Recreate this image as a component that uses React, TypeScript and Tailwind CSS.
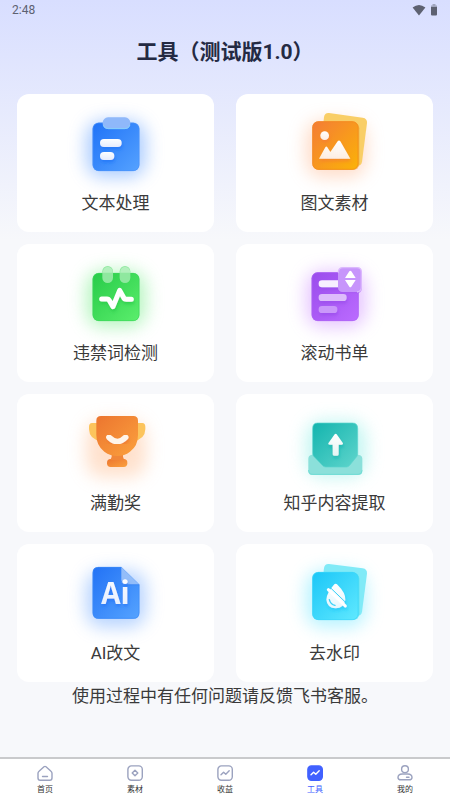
import React from 'react'

import { clsx } from 'clsx'

interface ArtProps {
  id: string
  glow: string
  from: string
  to: string
  x?: number
  y?: number
  children: React.ReactNode
}

/**
 * Shared canvas for the tool icons: soft coloured glow, body gradient
 * (`<id>-body`), white glyph gradient (`<id>-glyph`) and glyph shadow.
 */
const Art = ({ id, glow, from, to, x = -13, y = 0, children }: ArtProps) => (
  <svg
    viewBox={`${x} ${y} 270 270`}
    className="h-[90px] w-[90px] overflow-visible"
    aria-hidden="true"
  >
    <defs>
      <linearGradient id={`${id}-body`} x1="0" y1="0" x2="1" y2="1">
        <stop offset="0" stopColor={from} />
        <stop offset="1" stopColor={to} />
      </linearGradient>
      <linearGradient id={`${id}-glyph`} x1="0" y1="0" x2="0" y2="1">
        <stop offset="0" stopColor="#fff" />
        <stop offset="1" stopColor="#fff" stopOpacity="0.82" />
      </linearGradient>
      <filter id={`${id}-blur`} x="-60%" y="-60%" width="220%" height="220%">
        <feGaussianBlur stdDeviation="25" />
      </filter>
      <filter id={`${id}-shadow`} x="-40%" y="-40%" width="180%" height="200%">
        <feDropShadow dx="2" dy="8" stdDeviation="5" floodColor={from} floodOpacity="0.7" />
      </filter>
    </defs>
    <rect
      x="32"
      y={y + 62}
      width="180"
      height="170"
      rx="50"
      fill={glow}
      opacity="0.62"
      filter={`url(#${id}-blur)`}
    />
    {children}
  </svg>
)

const TextArt = () => (
  <Art id="text" glow="#7db0ff" from="#1f72f7" to="#55a2ff">
    <rect x="52" y="68" width="140" height="145" rx="18" fill="url(#text-body)" />
    <rect x="53" y="69" width="138" height="143" rx="17" fill="none" stroke="#4a93fa" strokeWidth="2" />
    <rect x="82" y="52" width="83" height="35" rx="16" fill="#8fb8fa" />
    <path d="M84 76q4 10 15 10h49q13 0 16-11" fill="none" stroke="#86d0fb" strokeWidth="3" />
    <g fill="url(#text-glyph)" filter="url(#text-shadow)">
      <rect x="74" y="117" width="65" height="24" rx="12" />
      <rect x="74" y="156" width="43" height="24" rx="12" />
    </g>
  </Art>
)

const ImageArt = () => (
  <Art id="image" glow="#ffc7a8" from="#f47c36" to="#fbb307" x={-16}>
    <path
      d="M101 39l101 14q14 2 13 16l-15 116q-2 13-15 12L84 184q-12-2-11-14L86 51q2-13 15-12Z"
      fill="#f9ce66"
    />
    <rect x="54" y="67" width="138" height="143" rx="18" fill="#e69b22" opacity="0.55" />
    <rect x="51" y="64" width="138" height="145" rx="18" fill="url(#image-body)" />
    <rect x="52" y="65" width="136" height="143" rx="17" fill="none" stroke="#f58a1f" strokeWidth="2" />
    <g fill="url(#image-glyph)" filter="url(#image-shadow)">
      <circle cx="88" cy="107" r="13" />
      <path d="M71 176l19-34q3-5 6 0l9 14 22-32q4-5 8 0l30 52Z" />
    </g>
  </Art>
)

const CheckArt = () => (
  <Art id="check" glow="#8df09c" from="#27cb49" to="#5bee6c">
    <rect x="52" y="69" width="140" height="144" rx="18" fill="url(#check-body)" />
    <rect x="53" y="70" width="138" height="142" rx="17" fill="none" stroke="#3cd85c" strokeWidth="2" />
    <rect x="81" y="48" width="32" height="51" rx="16" fill="#8fe89f" />
    <rect x="133" y="48" width="32" height="51" rx="16" fill="#8fe89f" />
    <path d="M83 68V62q3-11 14-12 12 1 15 12v6ZM135 68V62q3-11 14-12 12 1 15 12v6Z" fill="#b3f0bd" />
    <path
      d="M79 147H95Q100 147 103 153L113 170L133 121L144 141Q147 148 153 148H168"
      fill="none"
      stroke="#fff"
      strokeWidth="15"
      strokeLinecap="round"
      strokeLinejoin="round"
      filter="url(#check-shadow)"
    />
  </Art>
)

const ListArt = () => (
  <Art id="list" glow="#d8a4ff" from="#9a4cec" to="#bb6bff" x={-16}>
    <rect x="49" y="67" width="141" height="146" rx="18" fill="url(#list-body)" />
    <rect x="50" y="68" width="139" height="144" rx="17" fill="none" stroke="#ad67f5" strokeWidth="2" />
    <g filter="url(#list-shadow)">
      <rect x="70" y="91" width="76" height="21" rx="10" fill="#f7efff" />
      <rect x="70" y="132" width="84" height="21" rx="10" fill="#ddbcfb" />
      <rect x="70" y="168" width="56" height="21" rx="10" fill="#ca98fa" />
    </g>
    <rect x="129" y="57" width="70" height="73" rx="13" fill="#a75cf0" opacity="0.6" />
    <rect x="128" y="53" width="70" height="73" rx="13" fill="#c795fb" />
    <path d="M129 68q0-15 14-15h42q13 0 13 13v46q0 13-13 14" fill="none" stroke="#dbb8fd" strokeWidth="4" />
    <path d="M149 84l13-20q3-3 6 0l13 20ZM149 90h32l-13 20q-3 3-6 0Z" fill="#fff" />
  </Art>
)

const TrophyArt = () => (
  <Art id="trophy" glow="#ffcfae" from="#ec752f" to="#fba13e">
    <path d="M64 69H50q-9 1-9 11v8q1 30 35 35l20-14ZM187 69h14q9 1 9 11v8q-1 30-35 35l-20-14Z" fill="#fcc45c" />
    <rect x="95" y="177" width="61" height="24" rx="11" fill="url(#trophy-body)" />
    <path d="M109 158h34v12q1 7 7 10h-48q6-3 7-10Z" fill="#f1873a" />
    <path d="M77 48h97q14 0 14 14v43q0 33-24 50-17 13-38 13t-39-13q-24-18-24-50V62q0-14 14-14Z" fill="url(#trophy-body)" />
    <path
      d="M101 112q26 25 50 0"
      fill="none"
      stroke="#fff5ea"
      strokeWidth="17"
      strokeLinecap="round"
      filter="url(#trophy-shadow)"
    />
  </Art>
)

const ExtractArt = () => (
  <Art id="extract" glow="#a0f1ea" from="#13b4ae" to="#5fd5cc" x={-16} y={-15}>
    <path d="M50 149h139q12 1 12 12v37q0 12-12 12H51q-12 0-12-12v-37q0-10 11-12Z" fill="#8be0da" />
    <path d="M40 195q0 13 12 13h137q11 0 11-12" fill="none" stroke="#70ddd5" strokeWidth="3" />
    <path
      d="M67 54h104q16 0 16 16v76q0 5-3 9l-21 26q-4 5-10 5H91q-6 0-10-5l-26-27q-3-3-3-8V70q0-16 15-16Z"
      fill="url(#extract-body)"
      stroke="#5bd4cd"
      strokeWidth="2"
    />
    <path
      d="M118 88q3-3 6 0l19 27q1 4-4 4h-9v29q0 4-4 4h-10q-4 0-4-4v-29h-9q-6 0-4-4Z"
      fill="url(#extract-glyph)"
      filter="url(#extract-shadow)"
    />
  </Art>
)

const AiArt = () => (
  <Art id="ai" glow="#8cbaff" from="#2272f5" to="#55a3ff">
    <path d="M69 51h69l54 53v84q0 18-18 18H70q-18 0-18-18V69q0-18 17-18Z" fill="url(#ai-body)" />
    <path d="M69 52h69l53 52v84q0 17-17 17H70q-17 0-17-17V69q0-17 16-17Z" fill="none" stroke="#3d8bf8" strokeWidth="2" />
    <path d="M138 51l54 53h-42q-12 0-12-12Z" fill="#93bdf9" />
    <path d="M138 92q0 12 12 12h42" fill="none" stroke="#2f7ef5" strokeWidth="2" />
    <text
      x="120"
      y="162"
      textAnchor="middle"
      className="font-['Noto_Sans_CJK_SC',sans-serif] text-[90px] font-bold"
      fill="url(#ai-glyph)"
      filter="url(#ai-shadow)"
    >
      Ai
    </text>
  </Art>
)

const WatermarkArt = () => (
  <Art id="mark" glow="#8cecff" from="#1bc6f7" to="#60e9ff" x={-16}>
    <path
      d="M101 42l101 13q14 2 13 16l-15 114q-2 13-15 12L84 184q-12-2-11-14L86 54q2-13 15-12Z"
      fill="#80eaf7"
    />
    <rect x="54" y="68" width="138" height="142" rx="18" fill="#38d8ee" opacity="0.6" />
    <rect x="51" y="66" width="138" height="144" rx="18" fill="url(#mark-body)" />
    <rect x="52" y="67" width="136" height="142" rx="17" fill="none" stroke="#3dd6f9" strokeWidth="2" />
    <g filter="url(#mark-shadow)">
      <path
        d="M117 103q4-4 8 0 27 27 25 47-4 24-29 25-26-2-28-26 1-20 24-46Z"
        fill="url(#mark-glyph)"
      />
      <path d="M99 119l51 49" fill="none" stroke="#fff" strokeWidth="9" strokeLinecap="round" />
    </g>
    <path d="M104 112l49 47" fill="none" stroke="#37d0f8" strokeWidth="3" />
    <path d="M102 149q4 15 17 17" fill="none" stroke="#37d0f8" strokeWidth="4" strokeLinecap="round" />
  </Art>
)

const tools = [
  { label: '文本处理', icon: TextArt },
  { label: '图文素材', icon: ImageArt },
  { label: '违禁词检测', icon: CheckArt },
  { label: '滚动书单', icon: ListArt },
  { label: '满勤奖', icon: TrophyArt },
  { label: '知乎内容提取', icon: ExtractArt },
  { label: 'AI改文', icon: AiArt },
  { label: '去水印', icon: WatermarkArt },
]

const tabs = [
  {
    label: '首页',
    icon: (
      <>
        <path d="M2 6.2 7 1.8Q8 1 9 1.8L14 6.2Q15 7 15 8.3V13Q15 15.2 12.8 15.2H3.2Q1 15.2 1 13V8.3Q1 7 2 6.2Z" />
        <path d="M5.5 11.5h5" />
      </>
    ),
  },
  {
    label: '素材',
    icon: (
      <>
        <rect x="0.9" y="0.9" width="14.4" height="14.4" rx="3.5" />
        <path d="M8 5.2 10.8 8 8 10.8 5.2 8Z" />
      </>
    ),
  },
  {
    label: '收益',
    icon: (
      <>
        <rect x="0.9" y="0.9" width="14.4" height="14.4" rx="3.5" />
        <path d="M4 9.8 6.6 7.2 8.8 9.2 12.2 5.8" />
      </>
    ),
  },
  {
    label: '工具',
    active: true,
    icon: (
      <>
        <rect x="0.9" y="0.9" width="14.4" height="14.4" rx="3.5" fill="currentColor" />
        <path d="M4 9.8 6.6 7.2 8.8 9.2 12.2 5.8" stroke="#fff" />
      </>
    ),
  },
  {
    label: '我的',
    icon: (
      <>
        <circle cx="8" cy="4.2" r="3.4" />
        <path d="M5.2 9h5.6Q15 9.2 15 12.4 15 14.8 12 14.8H4Q1 14.8 1 12.4 1 9.2 5.2 9Z" />
        <path d="M9.5 12.2h2.5" />
      </>
    ),
  },
]

const StatusBar = () => (
  <div className="flex h-5 items-center justify-between px-3 text-xs text-[#5d6171]">
    <span>2:48</span>
    <span className="flex items-center gap-1">
      <svg viewBox="0 0 14 12" className="h-3 w-3.5" fill="currentColor" aria-hidden="true">
        <path d="M.6 3.5Q7-1.6 13.4 3.5L7 11.4Z" />
      </svg>
      <svg viewBox="0 0 8 12" className="h-3 w-2" fill="currentColor" aria-hidden="true">
        <path d="M2.5 0h3v1.5H7V3H1V1.5h1.5Z" opacity="0.45" />
        <path d="M1 3h6v7.5q0 1-1 1H2q-1 0-1-1Z" />
      </svg>
    </span>
  </div>
)

export default function App() {
  return (
    <div className="flex min-h-screen flex-col bg-[#f7f8fb] bg-[linear-gradient(to_bottom,#d8deff_0px,#f7f8fb_240px)] font-[Roboto,'Noto_Sans_CJK_SC',sans-serif]">
      <StatusBar />

      <h1 className="pt-4 text-center text-[21px] leading-8 font-bold text-[#242a43]">
        工具（测试版1.0）
      </h1>

      <main className="flex-1 px-[17px] pt-[26px]">
        <div className="grid grid-cols-2 gap-x-[22px] gap-y-3">
          {tools.map(({ label, icon: Icon }) => (
            <button
              key={label}
              type="button"
              className="flex h-[138px] flex-col items-center gap-px rounded-xl bg-white pt-1.5 text-[17px] leading-6 text-[#3a3a3a]"
            >
              <Icon />
              {label}
            </button>
          ))}
        </div>
        <p className="text-center text-[17px] leading-7 text-[#3a3a3a]">
          使用过程中有任何问题请反馈飞书客服。
        </p>
      </main>

      <nav className="grid grid-cols-5 border-t-2 border-[#c9cacc] bg-white pt-1.5 pb-1">
        {tabs.map(({ label, icon, active }) => (
          <a
            key={label}
            href="#"
            aria-current={active ? 'page' : undefined}
            className={clsx(
              'flex flex-col items-center gap-[3px] text-[8px] leading-3',
              active ? 'text-[#4161ff]' : 'text-[#333]'
            )}
          >
            <svg
              viewBox="0 0 16 16"
              className={clsx('h-4 w-4', active ? 'text-[#4161ff]' : 'text-[#9ba2bf]')}
              fill="none"
              stroke="currentColor"
              strokeWidth="1.4"
              strokeLinecap="round"
              strokeLinejoin="round"
              aria-hidden="true"
            >
              {icon}
            </svg>
            {label}
          </a>
        ))}
      </nav>
    </div>
  )
}
